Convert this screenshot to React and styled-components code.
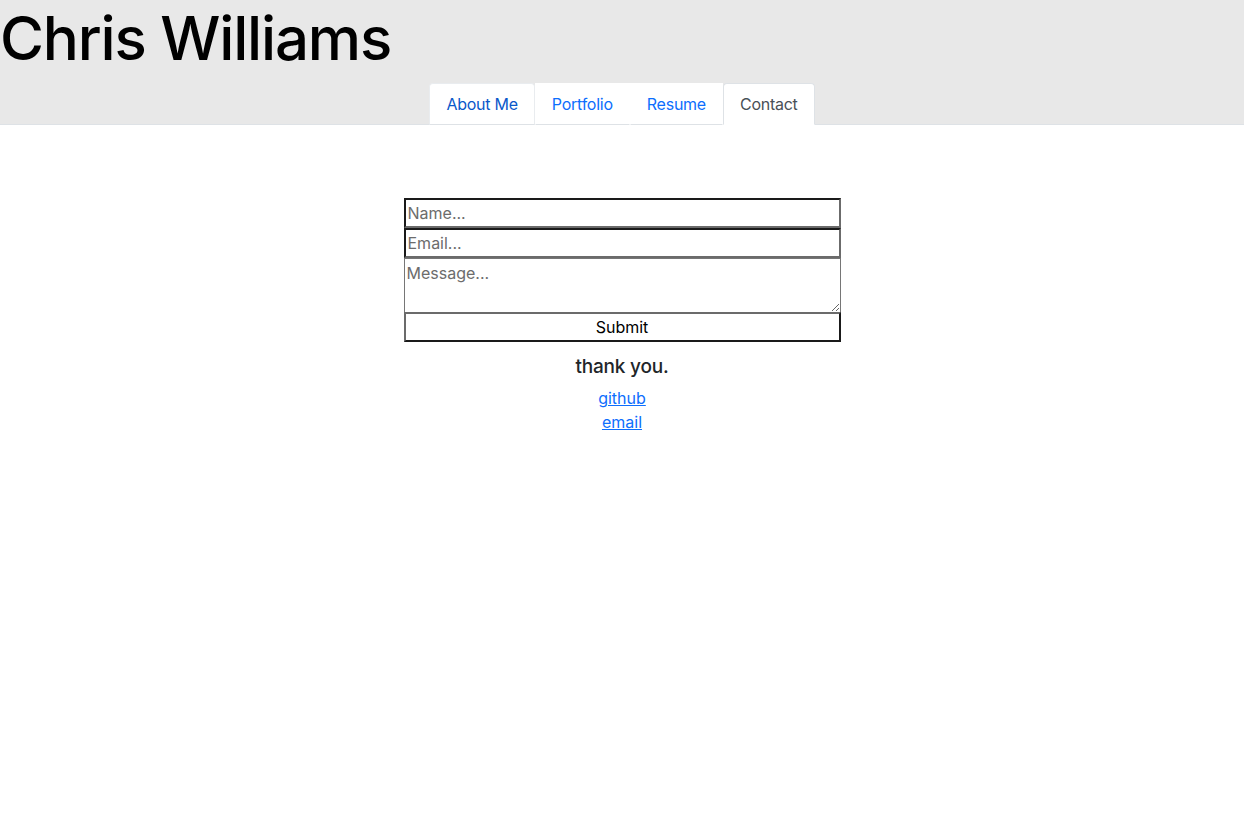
import React, { useState } from "react";
import styled, { createGlobalStyle } from "styled-components";

const GlobalStyle = createGlobalStyle`
  html, body {
    margin: 0;
    padding: 0;
    background: #fff;
    font-family: Inter, "Liberation Sans", sans-serif;
    font-size: 16px;
    line-height: 1.5;
    color: #212529;
  }
  * { box-sizing: border-box; }
`;

const tabs = ["About Me", "Portfolio", "Resume", "Contact"];

export default function App() {
  const [active, setActive] = useState("Contact");

  return (
    <>
      <GlobalStyle />
      <Header>
        <Title>Chris Williams</Title>
        <Tabs>
          {tabs.map((t) => (
            <Tab key={t} $active={t === active} $hover={t === "About Me"} onClick={() => setActive(t)}>
              {t}
            </Tab>
          ))}
        </Tabs>
      </Header>

      <Main>
        <Form onSubmit={(e) => e.preventDefault()}>
          <Input type="text" placeholder="Name..." />
          <Input type="email" placeholder="Email..." />
          <Message placeholder="Message..." />
          <Submit type="submit">Submit</Submit>
        </Form>
        <Thanks>thank you.</Thanks>
        <Links>
          <a href="#github">github</a>
          <a href="#email">email</a>
        </Links>
      </Main>
    </>
  );
}

const Header = styled.header`
  background: #e8e8e8;
  border-bottom: 1px solid #dee2e6;
  display: flex;
  flex-direction: column;
`;

const Title = styled.h1`
  margin: 0;
  height: 83px;
  font-size: 60px;
  font-weight: 500;
  letter-spacing: -1.2px;
  line-height: 76px;
  color: #000;
`;

const Tabs = styled.nav`
  display: flex;
  justify-content: center;
  margin-bottom: -1px;
`;

const Tab = styled.button`
  font: inherit;
  background: #fff;
  padding: 8px 16px;
  line-height: 24px;
  letter-spacing: -0.25px;
  cursor: pointer;
  border: 1px solid transparent;
  border-radius: ${(p) => (p.$active || p.$hover ? "4px 4px 0 0" : "0")};
  color: ${(p) => (p.$active ? "#495057" : p.$hover ? "#0a58ca" : "#0d6efd")};
  border-color: ${(p) =>
    p.$active
      ? "#dee2e6 #dee2e6 #fff"
      : p.$hover
      ? "#e9ecef #e9ecef #dee2e6"
      : "#fff #fff #dee2e6"};
`;

const Main = styled.main`
  display: flex;
  flex-direction: column;
  align-items: center;
  padding-top: 73px;
`;

const Form = styled.form`
  width: 437px;
  display: flex;
  flex-direction: column;
`;

const Input = styled.input`
  height: 30px;
  width: 100%;
  margin: 0;
  padding: 1px 2px;
  font: inherit;
  font-size: 16px;
  border: 2px solid;
  border-color: #1a1a1a #6b6b6b #6b6b6b #1a1a1a;
  &::placeholder { color: #6c6c6c; }
`;

const Message = styled.textarea`
  height: 55px;
  width: 100%;
  margin: 0 0 -1px;
  padding: 2px;
  font: inherit;
  font-size: 16px;
  line-height: 1.5;
  border: 1px solid #767676;
  &::placeholder { color: #6c6c6c; }
`;

const Submit = styled.button`
  height: 30px;
  width: 100%;
  margin: 0;
  font: inherit;
  font-size: 16px;
  color: #000;
  background: #fff;
  border: 2px solid;
  border-color: #6b6b6b #1a1a1a #1a1a1a #6b6b6b;
  line-height: 24px;
  padding: 0;
`;

const Thanks = styled.p`
  margin: 11px 0 0;
  font-size: 19px;
  line-height: 28px;
  font-weight: 500;
  letter-spacing: -0.2px;
  color: #212529;
`;

const Links = styled.div`
  display: flex;
  flex-direction: column;
  align-items: center;
  margin-top: 5px;

  a {
    color: #0d6efd;
    text-decoration: underline;
    line-height: 24px;
  }
`;
